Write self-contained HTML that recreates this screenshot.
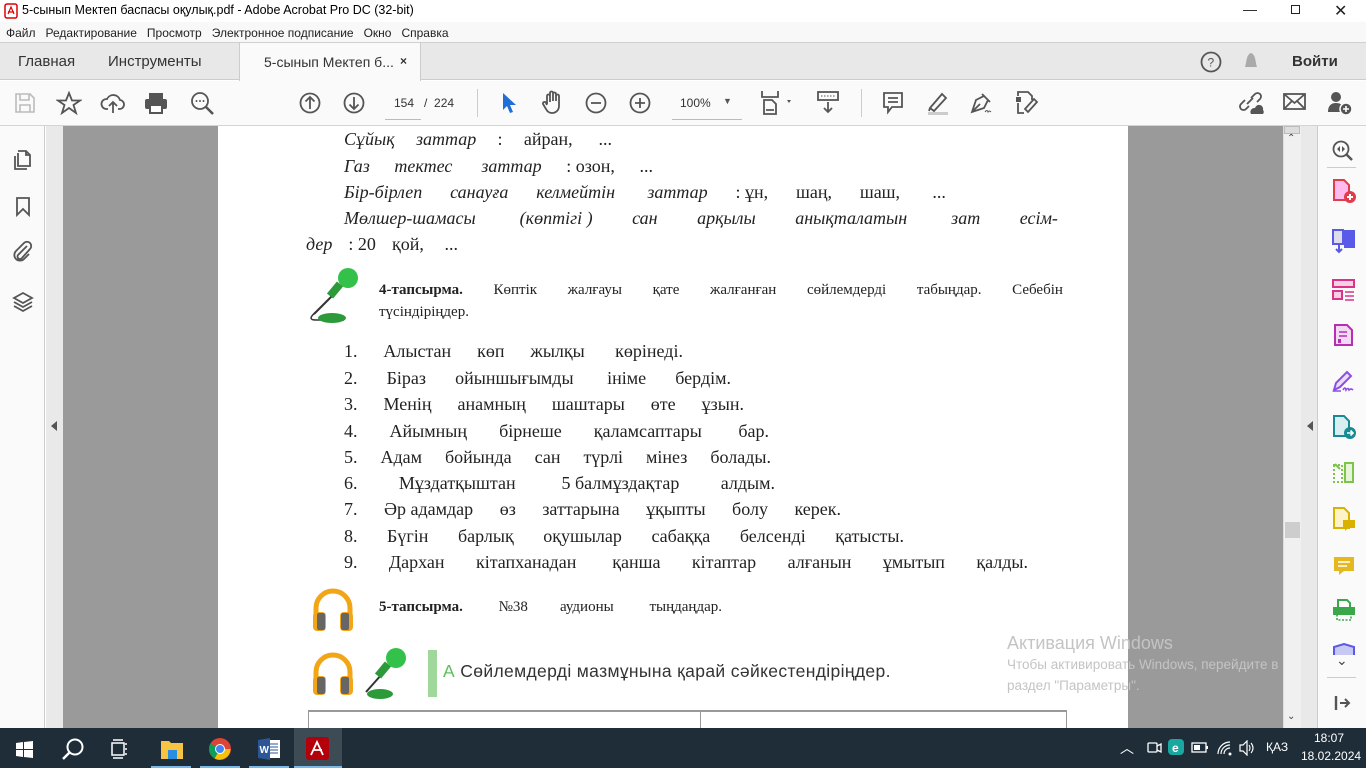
<!DOCTYPE html>
<html><head><meta charset="utf-8"><style>
*{margin:0;padding:0;box-sizing:border-box}
body{width:1366px;height:768px;overflow:hidden;position:relative;font-family:"Liberation Sans",sans-serif;background:#fff}
.a{position:absolute}
.ui{font-family:"Liberation Sans","DejaVu Sans",sans-serif;color:#222}
.pg{font-family:"Liberation Serif",serif;color:#222;white-space:nowrap}
.pg i{font-style:italic}
.li{position:absolute;left:344px;font-size:18px;display:flex;justify-content:space-between}
svg{position:absolute}
.ic{stroke:#555;fill:none;stroke-width:1.8}
</style></head><body>
<!-- title bar -->
<div class="a" style="left:0;top:0;width:1366px;height:22px;background:#fff"></div>
<svg style="left:4px;top:3px" width="14" height="16"><rect x="1" y="1" width="12" height="14" rx="2" fill="#fff" stroke="#d00" stroke-width="1.5"/><path d="M4 11 L7 4 L10 11 M4 9 H10" stroke="#d00" fill="none" stroke-width="1.2"/></svg>
<div class="a ui" style="left:22px;top:3px;font-size:12.5px;color:#000">5-сынып Мектеп баспасы оқулық.pdf - Adobe Acrobat Pro DC (32-bit)</div>
<div class="a ui" style="left:1243px;top:1px;font-size:14px">—</div>
<div class="a" style="left:1291px;top:5px;width:9px;height:9px;border:1px solid #222"></div>
<div class="a ui" style="left:1334px;top:1px;font-size:16px">✕</div>
<!-- menu -->
<div class="a" style="left:0;top:22px;width:1366px;height:21px;background:#f8f8f8;border-bottom:1px solid #d0d0d0"></div>
<div class="a ui" style="left:6px;top:26px;font-size:12px;word-spacing:0">Файл&nbsp;&nbsp; Редактирование&nbsp;&nbsp; Просмотр&nbsp;&nbsp; Электронное подписание&nbsp;&nbsp; Окно&nbsp;&nbsp; Справка</div>
<!-- tabs -->
<div class="a" style="left:0;top:43px;width:1366px;height:37px;background:#e8e8e8;border-bottom:1px solid #ccc"></div>
<div class="a" style="left:239px;top:43px;width:182px;height:38px;background:#fafafa;border-left:1px solid #ccc;border-right:1px solid #ccc"></div>
<div class="a ui" style="left:18px;top:53px;font-size:15px;color:#333">Главная</div>
<div class="a ui" style="left:108px;top:53px;font-size:15px;color:#333">Инструменты</div>
<div class="a ui" style="left:264px;top:54px;font-size:14px;color:#333">5-сынып Мектеп б...</div>
<div class="a ui" style="left:400px;top:54px;font-size:12px;color:#333;font-weight:bold">×</div>
<svg style="left:1200px;top:51px" width="22" height="22"><circle cx="11" cy="11" r="9.5" class="ic"/><text x="7.5" y="15.5" font-size="12" fill="#555" font-family="Liberation Sans">?</text></svg>
<svg style="left:1242px;top:51px" width="18" height="22"><path d="M9 2 C4 4 5 10 3 16 H15 C13 10 14 4 9 2Z M7 18 H11" fill="#aaa"/></svg>
<div class="a ui" style="left:1292px;top:53px;font-size:15px;font-weight:bold;color:#333">Войти</div>
<!-- toolbar -->
<div class="a" style="left:0;top:81px;width:1366px;height:45px;background:#fafafa;border-bottom:1px solid #d4d4d4"></div>
<svg style="left:14px;top:92px" width="22" height="22"><path d="M2 2H16L20 6V20H2Z M6 2V8H15V2 M6 20V13H16V20" stroke="#bbb" fill="none" stroke-width="1.6"/></svg>
<svg style="left:56px;top:91px" width="26" height="24"><path d="M13 2L16 9.5H24L17.5 14L20 22L13 17L6 22L8.5 14L2 9.5H10Z" class="ic"/></svg>
<svg style="left:100px;top:91px" width="26" height="24"><path d="M8 18H6A5 5 0 0 1 7 8A7 7 0 0 1 20 9A4.5 4.5 0 0 1 19 18H18 M13 22V11 M9 15L13 11L17 15" class="ic"/></svg>
<svg style="left:143px;top:91px" width="26" height="24"><rect x="6" y="2" width="14" height="6" fill="#555"/><rect x="2" y="8" width="22" height="10" rx="2" fill="#555"/><rect x="7" y="14" width="12" height="8" fill="#fff" stroke="#555" stroke-width="2"/></svg>
<svg style="left:190px;top:91px" width="26" height="26"><circle cx="10" cy="10" r="8" class="ic"/><path d="M16 16L23 23" stroke="#555" stroke-width="2.6"/><circle cx="6.5" cy="10" r="1" fill="#555"/><circle cx="10" cy="10" r="1" fill="#555"/><circle cx="13.5" cy="10" r="1" fill="#555"/></svg>
<svg style="left:299px;top:92px" width="22" height="22"><circle cx="11" cy="11" r="9.5" class="ic"/><path d="M11 17V5 M6.5 9.5L11 5L15.5 9.5" class="ic"/></svg>
<svg style="left:343px;top:92px" width="22" height="22"><circle cx="11" cy="11" r="9.5" class="ic"/><path d="M11 5V17 M6.5 12.5L11 17L15.5 12.5" class="ic"/></svg>
<div class="a" style="left:385px;top:119px;width:36px;height:1px;background:#bbb"></div>
<div class="a ui" style="left:394px;top:96px;font-size:12px;color:#333">154&nbsp;&nbsp;&nbsp;/&nbsp;&nbsp;224</div>
<div class="a" style="left:477px;top:89px;width:1px;height:28px;background:#ccc"></div>
<svg style="left:500px;top:92px" width="16" height="22"><path d="M3 1V18L7 14L10 21L13 20L10 13H16Z" fill="#1f6fd6"/></svg>
<svg style="left:540px;top:90px" width="26" height="26"><path d="M7 14V6a1.5 1.5 0 0 1 3 0V12 M10 11V3a1.5 1.5 0 0 1 3 0V11 M13 11V4a1.5 1.5 0 0 1 3 0V11 M16 11V6a1.5 1.5 0 0 1 3 0V16c0 4-3 7-7 7c-3 0-5-2-6-4L3 14a1.5 1.5 0 0 1 3-1L7 15" class="ic" stroke-width="1.5"/></svg>
<svg style="left:585px;top:92px" width="22" height="22"><circle cx="11" cy="11" r="9.5" class="ic"/><path d="M6 11H16" class="ic"/></svg>
<svg style="left:629px;top:92px" width="22" height="22"><circle cx="11" cy="11" r="9.5" class="ic"/><path d="M6 11H16 M11 6V16" class="ic"/></svg>
<div class="a" style="left:672px;top:119px;width:70px;height:1px;background:#bbb"></div>
<div class="a ui" style="left:680px;top:96px;font-size:12px;color:#333">100%</div>
<div class="a ui" style="left:723px;top:96px;font-size:9px;color:#555">▼</div>
<svg style="left:760px;top:90px" width="36" height="26"><path d="M2 1V7H18V1 M4 10H12L16 14V24H4Z M6 20H14" class="ic" stroke-width="1.5"/><path d="M27 10L31 10L29 13Z" fill="#555"/></svg>
<svg style="left:816px;top:90px" width="24" height="26"><rect x="2" y="2" width="20" height="8" class="ic" stroke-width="1.5"/><path d="M5 6H19" stroke="#555" stroke-dasharray="1.5 1.5"/><path d="M12 12V22 M8 18L12 22L16 18" class="ic"/></svg>
<div class="a" style="left:861px;top:89px;width:1px;height:28px;background:#ccc"></div>
<svg style="left:882px;top:91px" width="22" height="24"><path d="M2 2H20V16H10L6 21V16H2Z M6 7H16 M6 11H16" class="ic"/></svg>
<svg style="left:924px;top:90px" width="26" height="26"><path d="M6 18L18 4L22 8L10 21Z M6 18L5 21" class="ic"/><rect x="4" y="22" width="20" height="3" fill="#ccc"/></svg>
<svg style="left:968px;top:90px" width="26" height="26"><path d="M4 22L8 10L16 6L20 10L16 18ZM4 22L12 14 M14 4L22 12" class="ic" stroke-width="1.5"/><path d="M17 22q2-3 3 0q1-2 3 0" stroke="#555" fill="none"/></svg>
<svg style="left:1012px;top:90px" width="28" height="26"><path d="M6 6V2H16L20 6V10 M6 13V23H12 M16 22L25 12L22 9L13 19Z" class="ic" stroke-width="1.6"/><rect x="4" y="7" width="5" height="5" fill="#555"/></svg>
<svg style="left:1237px;top:90px" width="28" height="26"><path d="M10 14L16 8 M8 10L4 14a3 3 0 0 0 5 5L12 16 M14 8L18 4a3 3 0 0 1 5 5L20 12" class="ic"/><path d="M14 24a4 4 0 0 1 4-6a4 4 0 0 1 8 2a3 3 0 0 1 0 4Z" fill="#555"/></svg>
<svg style="left:1283px;top:92px" width="24" height="20"><rect x="1" y="2" width="21" height="15" class="ic" stroke-width="1.5"/><path d="M1 2L11.5 11L22 2 M1 17L9 9 M22 17L14 9" class="ic" stroke-width="1.3"/></svg>
<svg style="left:1326px;top:90px" width="28" height="26"><circle cx="10" cy="7" r="5" fill="#555"/><path d="M2 22c0-7 4-9 8-9s8 2 8 7V22Z" fill="#555"/><circle cx="20" cy="19" r="6" fill="#555" stroke="#fafafa" stroke-width="1.5"/><path d="M17 19H23 M20 16V22" stroke="#fff" stroke-width="1.6"/></svg>
<!-- left sidebar -->
<div class="a" style="left:0;top:126px;width:45px;height:602px;background:#fafafa;border-right:1px solid #ccc"></div>
<svg style="left:12px;top:148px" width="22" height="22"><path d="M6 5V18H18V7L14 3H6 M14 3V7H18 M3 8V21H15" class="ic" stroke-width="1.7"/></svg>
<svg style="left:14px;top:196px" width="18" height="22"><path d="M3 2H15V19L9 13L3 19Z" class="ic" stroke-width="1.7"/></svg>
<svg style="left:11px;top:240px" width="24" height="24"><path d="M16 6L7 15a2.5 2.5 0 0 0 4 3L19 9a4 4 0 0 0-6-6L5 11a5.5 5.5 0 0 0 8 8L18 14" class="ic" stroke-width="1.7"/></svg>
<svg style="left:11px;top:290px" width="24" height="24"><path d="M12 3L21 8L12 13L3 8Z M3 12L12 17L21 12 M3 16L12 21L21 16" class="ic" stroke-width="1.7"/></svg>
<div class="a" style="left:46px;top:126px;width:17px;height:602px;background:#e9e9e9"></div>
<div class="a" style="left:51px;top:421px;width:0;height:0;border-top:5px solid transparent;border-bottom:5px solid transparent;border-right:6px solid #555"></div>
<div class="a" style="left:63px;top:126px;width:155px;height:602px;background:#9a9a9a"></div>
<div class="a" style="left:1128px;top:126px;width:155px;height:602px;background:#9a9a9a"></div>
<!-- scrollbar -->
<div class="a" style="left:1283px;top:126px;width:18px;height:602px;background:#f0f0f0;border-left:1px solid #ddd"></div>
<div class="a" style="left:1284px;top:126px;width:16px;height:8px;background:#ddd;border:1px solid #bbb"></div>
<div class="a ui" style="left:1287px;top:133px;font-size:10px;color:#444">⌃</div>
<div class="a" style="left:1285px;top:522px;width:15px;height:16px;background:#cdcdcd"></div>
<div class="a ui" style="left:1287px;top:711px;font-size:10px;color:#444">⌄</div>
<div class="a" style="left:1301px;top:126px;width:17px;height:602px;background:#e9e9e9;border-right:1px solid #ccc"></div>
<div class="a" style="left:1307px;top:421px;width:0;height:0;border-top:5px solid transparent;border-bottom:5px solid transparent;border-right:6px solid #555"></div>
<!-- right panel -->
<div class="a" style="left:1318px;top:126px;width:48px;height:602px;background:#fafafa"></div>
<svg style="left:1331px;top:139px" width="24" height="24"><circle cx="10" cy="10" r="7.5" class="ic" stroke-width="2"/><path d="M15 15L21 21" stroke="#555" stroke-width="2.5"/><path d="M9 7L6 10L9 13Z M11 7L14 10L11 13Z" fill="#555"/></svg>
<div class="a" style="left:1327px;top:167px;width:29px;height:1px;background:#ccc"></div>
<svg style="left:1331px;top:178px" width="26" height="26"><path d="M3 2H13L18 7V22H3Z" fill="#fbe" stroke="#e03c4c" stroke-width="2"/><circle cx="19" cy="19" r="6" fill="#e03c4c"/><path d="M16 19H22M19 16V22" stroke="#fff" stroke-width="2"/></svg>
<svg style="left:1331px;top:228px" width="26" height="26"><path d="M2 2H12V16H2Z" fill="#dde" stroke="#5a5ae8" stroke-width="2"/><path d="M13 2H24V20H13Z" fill="#5a5ae8"/><path d="M8 17V24 M5 21L8 24L11 21" stroke="#5a5ae8" stroke-width="2" fill="none"/></svg>
<svg style="left:1331px;top:278px" width="26" height="24"><rect x="2" y="2" width="21" height="7" fill="#f7d0e4" stroke="#d9348a" stroke-width="2"/><rect x="2" y="13" width="9" height="8" fill="#f7d0e4" stroke="#d9348a" stroke-width="2"/><path d="M14 14H23M14 18H23M14 22H23" stroke="#d9348a" stroke-width="1.5"/></svg>
<svg style="left:1332px;top:323px" width="24" height="24"><path d="M3 2H15L20 7V22H3Z" fill="#f4d9f4" stroke="#b52fb5" stroke-width="2"/><path d="M7 9H15M7 13H15" stroke="#b52fb5" stroke-width="1.5"/><rect x="6" y="16" width="3" height="4" fill="#b52fb5"/></svg>
<svg style="left:1331px;top:369px" width="26" height="24"><path d="M3 21L5 14L16 3L20 7L9 18Z" fill="#eadcff" stroke="#8a4fe0" stroke-width="2"/><path d="M2 22H10M12 21q2-4 3 0q2-3 3 0q2-2 4 0" stroke="#8a4fe0" stroke-width="1.6" fill="none"/></svg>
<svg style="left:1331px;top:414px" width="26" height="26"><path d="M3 2H13L18 7V22H3Z" fill="#d8eef0" stroke="#168b94" stroke-width="2"/><circle cx="19" cy="19" r="6" fill="#168b94"/><path d="M16 19H22M19.5 16.5L22 19L19.5 21.5" stroke="#fff" stroke-width="1.6" fill="none"/></svg>
<svg style="left:1332px;top:461px" width="24" height="24"><rect x="2" y="4" width="8" height="17" fill="none" stroke="#7cc44a" stroke-width="2" stroke-dasharray="2 2"/><rect x="13" y="2" width="8" height="19" fill="#e6f5da" stroke="#7cc44a" stroke-width="2"/><path d="M3 3L8 8" stroke="#7cc44a" stroke-width="2"/></svg>
<svg style="left:1332px;top:506px" width="24" height="26"><path d="M2 2H12L17 7V22H2Z" fill="#fdf2c8" stroke="#d9b200" stroke-width="2"/><rect x="11" y="14" width="12" height="8" fill="#d9b200"/><path d="M13 22L13 25L16 22" fill="#d9b200"/></svg>
<svg style="left:1332px;top:554px" width="24" height="24"><path d="M2 3H22V17H12L7 21V17H2Z" fill="#e6b820"/><path d="M6 8H18M6 12H15" stroke="#fff" stroke-width="1.6"/></svg>
<svg style="left:1331px;top:597px" width="26" height="26"><path d="M7 3H16L19 6V11H7Z" fill="#fff" stroke="#3aa84a" stroke-width="2"/><rect x="2" y="10" width="22" height="8" fill="#3aa84a"/><rect x="6" y="16" width="14" height="7" fill="none" stroke="#3aa84a" stroke-width="1.6" stroke-dasharray="2 1.5"/></svg>
<svg style="left:1332px;top:643px" width="24" height="12"><path d="M2 12V4L12 1L22 4V12" fill="#c8c8f4" stroke="#5a5ae8" stroke-width="2"/></svg>
<div class="a ui" style="left:1336px;top:652px;font-size:14px;color:#444">⌄</div>
<div class="a" style="left:1327px;top:677px;width:29px;height:1px;background:#ccc"></div>
<svg style="left:1334px;top:695px" width="18" height="16"><path d="M2 1V15" stroke="#555" stroke-width="2.4"/><path d="M6 8H15M11 4L15 8L11 12" stroke="#555" stroke-width="2" fill="none"/></svg>
<!-- page -->
<div class="a" style="left:218px;top:126px;width:910px;height:602px;background:#fff"></div>
<div class="li pg" style="top:129px;width:268px"><i>Сұйық</i><i>заттар</i><span>:</span><span>айран,</span><span>&nbsp;...</span></div>
<div class="li pg" style="top:156px;width:309px"><i>Газ</i><i>тектес</i><i>&nbsp;заттар</i><span>: озон,</span><span>...</span></div>
<div class="li pg" style="top:182px;width:602px"><i>Бір-бірлеп</i><i>санауға</i><i>келмейтін</i><i>&nbsp;заттар</i><span>: ұн,</span><span>шаң,</span><span>шаш,</span><span>&nbsp;...</span></div>
<div class="li pg" style="top:208px;width:714px"><i>Мөлшер-шамасы</i><i>&nbsp;(көптігі&nbsp;)</i><i>сан</i><i>арқылы</i><i>анықталатын</i><i>&nbsp;зат</i><i>есім-</i></div>
<div class="a pg" style="left:306px;top:234px;font-size:18px;width:152px;display:flex;justify-content:space-between"><i>дер</i><span>: 20</span><span>қой,</span><span>&nbsp;...</span></div>
<!-- mic icon -->
<svg style="left:304px;top:266px" width="58" height="60"><path d="M30 28L10 48" stroke="#333" stroke-width="2"/><path d="M12 46 q-10 8 0 8 L40 54" stroke="#333" fill="none" stroke-width="1.5"/><ellipse cx="28" cy="52" rx="14" ry="5" fill="#2d9a3a"/><path d="M26 30L36 18" stroke="#2d9a3a" stroke-width="8"/><circle cx="44" cy="12" r="10" fill="#34c14a"/></svg>
<div class="a pg" style="left:379px;top:282px;font-size:15px;width:684px;display:flex;justify-content:space-between"><b>4-тапсырма.</b><span>Көптік</span><span>жалғауы</span><span>қате</span><span>жалғанған</span><span>сөйлемдерді</span><span>табыңдар.</span><span>Себебін</span></div>
<div class="a pg" style="left:379px;top:304px;font-size:15px">түсіндіріңдер.</div>
<div class="li pg" style="top:341px;width:339px"><span>1.</span><span>Алыстан</span><span>көп</span><span>жылқы</span><span>&nbsp;көрінеді.</span></div>
<div class="li pg" style="top:368px;width:387px"><span>2.</span><span>Біраз</span><span>ойыншығымды</span><span>&nbsp;ініме</span><span>бердім.</span></div>
<div class="li pg" style="top:394px;width:400px"><span>3.</span><span>Менің</span><span>анамның</span><span>шаштары</span><span>өте</span><span>ұзын.</span></div>
<div class="li pg" style="top:421px;width:425px"><span>4.</span><span>Айымның</span><span>бірнеше</span><span>қаламсаптары</span><span>&nbsp;бар.</span></div>
<div class="li pg" style="top:447px;width:427px"><span>5.</span><span>Адам</span><span>бойында</span><span>сан</span><span>түрлі</span><span>мінез</span><span>болады.</span></div>
<div class="li pg" style="top:473px;width:431px"><span>6.</span><span>Мұздатқыштан</span><span>&nbsp;5 балмұздақтар</span><span>алдым.</span></div>
<div class="li pg" style="top:499px;width:497px"><span>7.</span><span>Әр адамдар</span><span>өз</span><span>заттарына</span><span>ұқыпты</span><span>болу</span><span>керек.</span></div>
<div class="li pg" style="top:526px;width:560px"><span>8.</span><span>Бүгін</span><span>барлық</span><span>оқушылар</span><span>сабаққа</span><span>белсенді</span><span>қатысты.</span></div>
<div class="li pg" style="top:552px;width:684px"><span>9.</span><span>Дархан</span><span>кітапханадан</span><span>&nbsp;қанша</span><span>кітаптар</span><span>алғанын</span><span>ұмытып</span><span>қалды.</span></div>
<!-- headphones -->
<svg style="left:310px;top:586px" width="46" height="46"><path d="M6 30V22a17 17 0 0 1 34 0V30" stroke="#f2a516" stroke-width="5" fill="none"/><rect x="3" y="26" width="13" height="19" rx="4" fill="#f2a516"/><rect x="30" y="26" width="13" height="19" rx="4" fill="#f2a516"/><rect x="7" y="27" width="8" height="17" rx="2" fill="#666"/><rect x="31" y="27" width="8" height="17" rx="2" fill="#666"/></svg>
<div class="a pg" style="left:379px;top:599px;font-size:15px;width:343px;display:flex;justify-content:space-between"><b>5-тапсырма.</b><span>&nbsp;№38</span><span>аудионы</span><span>&nbsp;тыңдаңдар.</span></div>
<svg style="left:310px;top:650px" width="46" height="46"><path d="M6 30V22a17 17 0 0 1 34 0V30" stroke="#f2a516" stroke-width="5" fill="none"/><rect x="3" y="26" width="13" height="19" rx="4" fill="#f2a516"/><rect x="30" y="26" width="13" height="19" rx="4" fill="#f2a516"/><rect x="7" y="27" width="8" height="17" rx="2" fill="#666"/><rect x="31" y="27" width="8" height="17" rx="2" fill="#666"/></svg>
<svg style="left:356px;top:646px" width="56" height="56"><path d="M26 28L10 46" stroke="#333" stroke-width="2"/><ellipse cx="24" cy="48" rx="13" ry="5" fill="#2d9a3a"/><path d="M22 30L32 18" stroke="#2d9a3a" stroke-width="8"/><circle cx="40" cy="12" r="10" fill="#34c14a"/></svg>
<div class="a" style="left:428px;top:650px;width:9px;height:47px;background:#9fd89a"></div>
<div class="a" style="left:443px;top:661px;font-size:17.5px;letter-spacing:0.35px;color:#333"><span style="color:#5bbf5b">А</span> Сөйлемдерді мазмұнына қарай сәйкестендіріңдер.</div>
<div class="a" style="left:308px;top:710px;width:759px;height:20px;border-top:2px solid #999;border-left:1px solid #999;border-right:1px solid #999"></div>
<div class="a" style="left:700px;top:710px;width:1px;height:20px;background:#999"></div>
<!-- watermark -->
<div class="a" style="left:1007px;top:633px;font-size:18px;color:#c4c4c4">Активация Windows</div>
<div class="a" style="left:1007px;top:657px;font-size:13.5px;color:#c4c4c4">Чтобы активировать Windows, перейдите в</div>
<div class="a" style="left:1007px;top:678px;font-size:13.5px;color:#c4c4c4">раздел "Параметры".</div>
<!-- taskbar -->
<div class="a" style="left:0;top:728px;width:1366px;height:40px;background:#1e2d38"></div>
<svg style="left:16px;top:741px" width="18" height="18"><path d="M0 2L7 1V8H0Z M8 1L17 0V8H8Z M0 9H7V16L0 15Z M8 9H17V17L8 16Z" fill="#fff"/></svg>
<svg style="left:60px;top:737px" width="26" height="26"><circle cx="15" cy="10" r="7.5" stroke="#fff" stroke-width="2" fill="none"/><path d="M10 15L3 22" stroke="#fff" stroke-width="2.5"/></svg>
<svg style="left:110px;top:739px" width="20" height="20"><path d="M2 4H14V16H2Z" stroke="#fff" fill="none" stroke-width="1.5"/><path d="M16 4V6M16 9V11M16 14V16M3 1H13M3 19H13" stroke="#fff" stroke-width="1.5"/></svg>
<svg style="left:160px;top:738px" width="24" height="22"><path d="M1 3H9L11 5H23V21H1Z" fill="#f6c342"/><rect x="8" y="12" width="9" height="9" fill="#2a8ee0"/></svg>
<div class="a" style="left:151px;top:766px;width:40px;height:2px;background:#7ab8e8"></div>
<svg style="left:208px;top:737px" width="24" height="24"><circle cx="12" cy="12" r="11" fill="#db4437"/><path d="M12 12L22.5 12A11 11 0 0 1 6.5 21.5Z" fill="#f4c20d"/><path d="M12 12L6.5 21.5A11 11 0 0 1 2.5 6.5Z" fill="#0f9d58"/><circle cx="12" cy="12" r="5" fill="#fff"/><circle cx="12" cy="12" r="4" fill="#4285f4"/></svg>
<div class="a" style="left:200px;top:766px;width:40px;height:2px;background:#7ab8e8"></div>
<svg style="left:257px;top:737px" width="24" height="24"><rect x="8" y="3" width="15" height="18" fill="#fff"/><path d="M11 7H21M11 10H21M11 13H21M11 16H21" stroke="#2b5797"/><path d="M1 3L13 1V23L1 21Z" fill="#2b5797"/><text x="2.5" y="16" font-size="10" font-weight="bold" fill="#fff" font-family="Liberation Sans">W</text></svg>
<div class="a" style="left:249px;top:766px;width:40px;height:2px;background:#7ab8e8"></div>
<div class="a" style="left:294px;top:728px;width:48px;height:40px;background:#3d4b55"></div>
<div class="a" style="left:294px;top:766px;width:48px;height:2px;background:#7ab8e8"></div>
<svg style="left:306px;top:737px" width="23" height="23"><rect width="23" height="23" rx="3" fill="#b3000b"/><path d="M5 18L11 5L17 18M7 13H16" stroke="#fff" stroke-width="1.8" fill="none"/></svg>
<div class="a ui" style="left:1120px;top:738px;font-size:14px;color:#fff">︿</div>
<svg style="left:1146px;top:739px" width="16" height="18"><rect x="2" y="4" width="9" height="9" rx="1" stroke="#fff" fill="none" stroke-width="1.3"/><path d="M11 7L15 5V13L11 11" stroke="#fff" fill="none" stroke-width="1.3"/></svg>
<svg style="left:1168px;top:739px" width="16" height="16"><rect width="16" height="16" rx="4" fill="#1aa7a0"/><text x="4" y="13" font-size="12" font-weight="bold" fill="#fff" font-family="Liberation Sans">e</text></svg>
<svg style="left:1191px;top:742px" width="18" height="12"><rect x="1" y="1" width="14" height="9" stroke="#fff" fill="none" stroke-width="1.3"/><rect x="3" y="3" width="6" height="5" fill="#fff"/><rect x="15" y="4" width="2" height="3" fill="#fff"/></svg>
<svg style="left:1216px;top:740px" width="18" height="16"><path d="M2 14A12 12 0 0 1 14 2 M5 14A9 9 0 0 1 14 5 M8 14A6 6 0 0 1 14 8" stroke="#fff" fill="none" stroke-width="1.2"/><circle cx="14" cy="14" r="1.5" fill="#fff"/></svg>
<svg style="left:1238px;top:740px" width="18" height="16"><path d="M2 5H5L9 1V15L5 11H2Z" stroke="#fff" fill="none" stroke-width="1.2"/><path d="M11 5q2 3 0 6M13 3q4 5 0 10" stroke="#fff" fill="none" stroke-width="1.1"/></svg>
<div class="a ui" style="left:1266px;top:740px;font-size:12px;color:#fff">ҚАЗ</div>
<div class="a ui" style="left:1314px;top:731px;font-size:12px;color:#fff">18:07</div>
<div class="a ui" style="left:1301px;top:749px;font-size:12px;color:#fff">18.02.2024</div>
</body></html>
